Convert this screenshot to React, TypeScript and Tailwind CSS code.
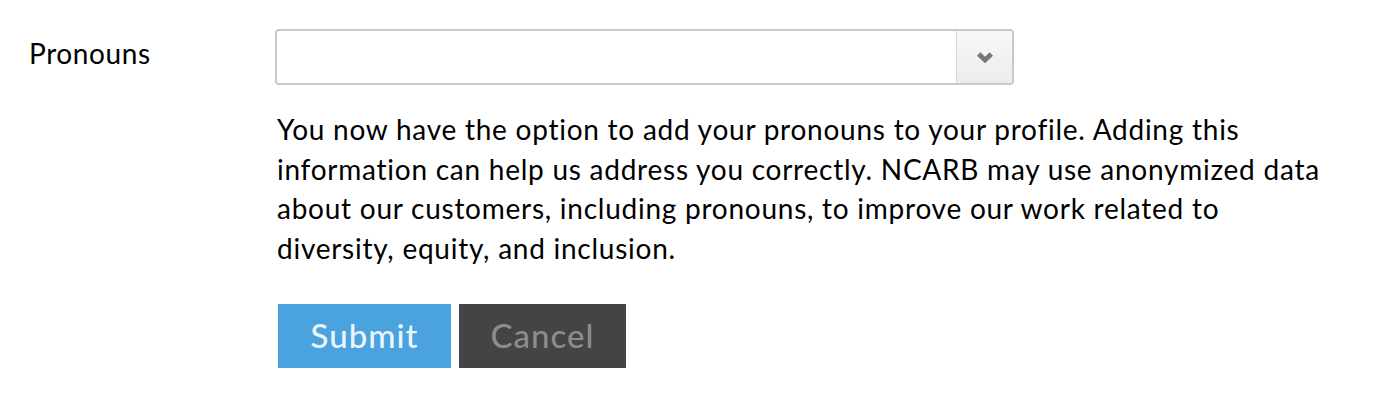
export default function App() {
  return (
    <div className="w-[1382px] h-[400px] bg-white font-['Lato',sans-serif] text-black">
      <div className="flex pt-[29px]">
        <div className="w-[277px] pl-[29px] pt-[4px] text-[28px] leading-[40px] tracking-[0.6px]">Pronouns</div>
        <div className="flex flex-col">
          <div className="flex w-[739px] h-[56px] -ml-[2px] rounded-[4px] border-2 border-[#c9c9c9] bg-white overflow-hidden">
            <div className="flex-1" />
            <div className="w-[56px] flex items-center justify-center border-l border-[#d6d6d6] bg-gradient-to-b from-[#f8f8f8] to-[#ececec]">
              <svg width="16" height="12" viewBox="0 0 14 10" className="mt-[2px]">
                <polygon points="0,3 3,0 7,3.8 11,0 14,3 7,9.5" fill="#777777" />
              </svg>
            </div>
          </div>
          <p className="mt-[25px] w-[1052px] text-[28px] leading-[39.5px] tracking-[0.75px]">
            You now have the option to add your pronouns to your profile. Adding this information can help us address you correctly. NCARB may use anonymized data about our customers, including pronouns, to improve our work related to diversity, equity, and inclusion.
          </p>
          <div className="flex gap-[8px] mt-[36px] ml-[1px]">
            <button className="w-[173px] h-[64px] bg-[#4aa3df] text-[#eaf5fc] text-[33px] font-medium tracking-[1px]">Submit</button>
            <button className="w-[167px] h-[64px] bg-[#444444] text-[#8c8c8c] text-[33px] font-medium tracking-[1px]">Cancel</button>
          </div>
        </div>
      </div>
    </div>
  );
}
